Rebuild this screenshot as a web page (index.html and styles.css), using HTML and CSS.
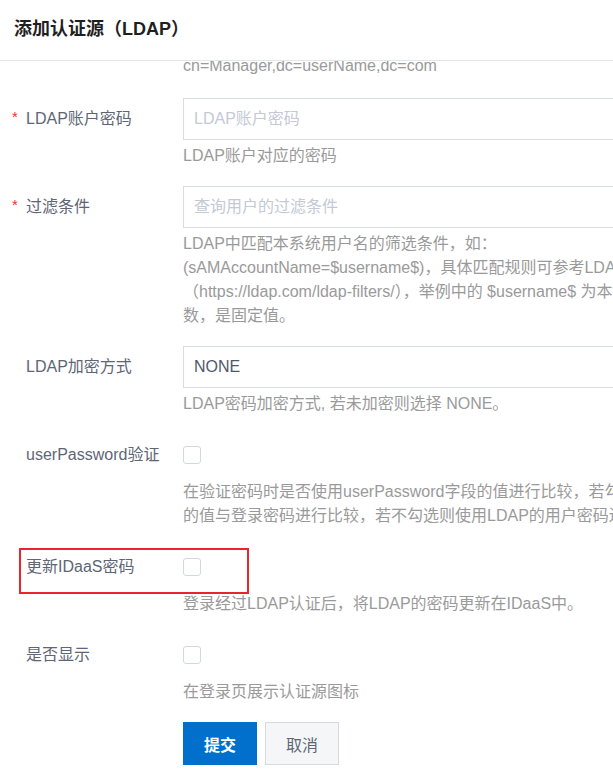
FILE: index.html
```html
<!DOCTYPE html>
<html lang="zh-CN">
<head>
<meta charset="utf-8">
<title>添加认证源（LDAP）</title>
<link rel="stylesheet" href="styles.css">
</head>
<body>
<div class="dialog">
  <header class="dlg-head">
    <h1 class="dlg-title">添加认证源（LDAP）</h1>
  </header>
  <div class="dlg-body">
    <form class="form">
      <div class="row row-tail">
        <div class="label"></div>
        <div class="field">
          <div class="hint">cn=Manager,dc=userName,dc=com</div>
        </div>
      </div>

      <div class="row">
        <div class="label"><span class="req">*</span>LDAP账户密码</div>
        <div class="field">
          <input class="input" type="text" placeholder="LDAP账户密码">
          <div class="hint">LDAP账户对应的密码</div>
        </div>
      </div>

      <div class="row">
        <div class="label"><span class="req">*</span>过滤条件</div>
        <div class="field">
          <input class="input" type="text" placeholder="查询用户的过滤条件">
          <div class="hint">LDAP中匹配本系统用户名的筛选条件，如：<br>(sAMAccountName=$username$)，具体匹配规则可参考LDAP官方文档<br>（https://ldap.com/ldap-filters/），举例中的 $username$ 为本系统的用户名参<br>数，是固定值。</div>
        </div>
      </div>

      <div class="row">
        <div class="label"><span class="req"></span>LDAP加密方式</div>
        <div class="field">
          <div class="input select">NONE</div>
          <div class="hint">LDAP密码加密方式, 若未加密则选择 NONE。</div>
        </div>
      </div>

      <div class="row">
        <div class="label"><span class="req"></span>userPassword验证</div>
        <div class="field">
          <div class="check-wrap"><span class="checkbox"></span></div>
          <div class="hint">在验证密码时是否使用userPassword字段的值进行比较，若勾选则使用userPassword字段<br>的值与登录密码进行比较，若不勾选则使用LDAP的用户密码进行验证。</div>
        </div>
      </div>

      <div class="row row-marked">
        <div class="label"><span class="req"></span>更新IDaaS密码</div>
        <div class="field">
          <div class="check-wrap"><span class="checkbox"></span></div>
          <div class="hint">登录经过LDAP认证后，将LDAP的密码更新在IDaaS中。</div>
        </div>
        <div class="mark"></div>
      </div>

      <div class="row">
        <div class="label"><span class="req"></span>是否显示</div>
        <div class="field">
          <div class="check-wrap"><span class="checkbox"></span></div>
          <div class="hint">在登录页展示认证源图标</div>
        </div>
      </div>

      <div class="row row-actions">
        <div class="label"></div>
        <div class="field actions">
          <button type="button" class="btn btn-primary">提交</button>
          <button type="button" class="btn btn-default">取消</button>
        </div>
      </div>
    </form>
  </div>
</div>
</body>
</html>
```

FILE: styles.css
```css
html, body {
  margin: 0;
  padding: 0;
  background: #ffffff;
}

body {
  font-family: "Liberation Sans", "Noto Sans CJK SC", sans-serif;
  font-size: 16px;
  overflow: hidden;
}

.dialog {
  width: 613px;
  height: 780px;
  overflow: hidden;
  background: #ffffff;
}

.dlg-head {
  height: 61px;
  box-sizing: border-box;
  border-bottom: 1px solid #e3e6eb;
  display: flex;
  align-items: center;
  padding: 0 14px 6px;
}

.dlg-title {
  margin: 0;
  font-size: 18px;
  font-weight: bold;
  color: #1f1f1f;
  white-space: nowrap;
}

.dlg-body {
  height: 719px;
  overflow: hidden;
}

.form {
  width: 900px;
  margin-top: -11px;
}

.row {
  display: flex;
  margin-bottom: 18px;
  position: relative;
}

.row-tail {
  margin-bottom: 20px;
}

.label {
  width: 183px;
  flex: none;
  box-sizing: border-box;
  padding-left: 12px;
  height: 42px;
  line-height: 42px;
  color: #5e6676;
  white-space: nowrap;
}

.row-tail .label {
  height: 0;
}

.req {
  display: inline-block;
  width: 14px;
  color: #f0302f;
  font-size: 15px;
  vertical-align: top;
  line-height: 38px;
}

.field {
  flex: 1;
}

.input {
  display: block;
  width: 640px;
  height: 42px;
  box-sizing: border-box;
  border: 1px solid #d8dde5;
  border-radius: 0;
  padding: 0 10px;
  font-family: inherit;
  font-size: 16px;
  color: #505868;
  background: #ffffff;
  outline: none;
  margin: 0;
}

.input::placeholder {
  color: #c3cad6;
}

.select {
  line-height: 40px;
}

.check-wrap {
  height: 42px;
  display: flex;
  align-items: center;
}

.checkbox {
  display: block;
  width: 18px;
  height: 18px;
  box-sizing: border-box;
  border: 1px solid #d3d8e0;
  border-radius: 3px;
  background: #ffffff;
}

.hint {
  padding-top: 4px;
  line-height: 24px;
  color: #9a9a9a;
  white-space: nowrap;
}

.mark {
  position: absolute;
  left: 19px;
  top: 2px;
  width: 230px;
  height: 46px;
  box-sizing: border-box;
  border: 2px solid #e8252b;
  pointer-events: none;
}

.row-actions {
  margin-top: 6px;
}

.actions {
  display: flex;
  gap: 8px;
}

.btn {
  width: 74px;
  height: 43px;
  box-sizing: border-box;
  font-family: inherit;
  font-size: 16px;
  padding: 0;
  margin: 0;
  border-radius: 0;
  cursor: pointer;
}

.btn-primary {
  background: #0070cc;
  border: 1px solid #0070cc;
  color: #ffffff;
  font-weight: bold;
}

.btn-default {
  background: #f5f6f7;
  border: 1px solid #d5dae2;
  color: #5e6676;
}
```
